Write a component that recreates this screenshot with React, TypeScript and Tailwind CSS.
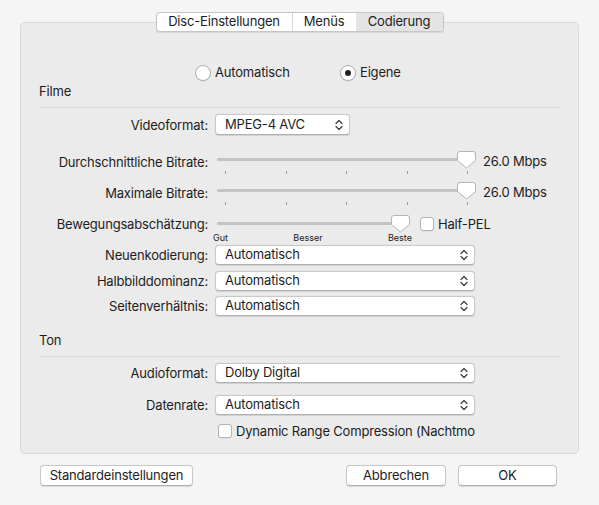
import React from "react";

const FONT = { fontFamily: "Inter, 'Liberation Sans', Arial, sans-serif" };

function Chevrons() {
  return (
    <svg width="8" height="12" viewBox="0 0 8 12" className="shrink-0">
      <path d="M1 4.5 L4 1.5 L7 4.5" fill="none" stroke="#3a3a3a" strokeWidth="1.2" strokeLinecap="round" strokeLinejoin="round" />
      <path d="M1 7.5 L4 10.5 L7 7.5" fill="none" stroke="#3a3a3a" strokeWidth="1.2" strokeLinecap="round" strokeLinejoin="round" />
    </svg>
  );
}

function Select({ value, width }: { value: string; width: string }) {
  return (
    <div
      className={`${width} h-[20px] ml-[7px] flex items-center justify-between pl-[9px] pr-[6px] bg-white border border-[#c9c9c9] border-b-[#b0b0b0] rounded-[4px] shadow-[0_0.5px_1px_rgba(0,0,0,0.12)] text-[13px] text-[#1d1d1d]`}
    >
      <span>{value}</span>
      <Chevrons />
    </div>
  );
}

function Thumb({ left }: { left: number }) {
  return (
    <svg
      width="19"
      height="18"
      viewBox="0 0 19 18"
      className="absolute top-0"
      style={{ left }}
    >
      <path
        d="M3 0.5 H16 Q18.5 0.5 18.5 3 V9.5 L9.5 17 L0.5 9.5 V3 Q0.5 0.5 3 0.5 Z"
        fill="#ffffff"
        stroke="#b4b4b4"
        strokeWidth="1"
      />
    </svg>
  );
}

function Slider({ width, thumbLeft, ticks }: { width: number; thumbLeft: number; ticks?: number[] }) {
  return (
    <div className="relative ml-[9px] h-[24px]" style={{ width }}>
      <div className="absolute left-0 right-0 top-[7px] h-[3px] rounded-full bg-[#c3c3c3]" />
      {ticks &&
        ticks.map((t) => (
          <div key={t} className="absolute top-[20px] w-[1px] h-[3px] bg-[#9c9c9c]" style={{ left: t }} />
        ))}
      <Thumb left={thumbLeft} />
    </div>
  );
}

function Label({ children, className = "" }: { children: React.ReactNode; className?: string }) {
  return (
    <div className={`w-[187px] shrink-0 text-right text-[13px] leading-[16px] text-[#1d1d1d] ${className}`}>{children}</div>
  );
}

function Checkbox() {
  return <div className="w-[14px] h-[14px] shrink-0 bg-white border border-[#b3b3b3] rounded-[3px] shadow-[0_0.5px_0.5px_rgba(0,0,0,0.08)]" />;
}

function Radio({ checked }: { checked?: boolean }) {
  return (
    <div className="w-[16px] h-[16px] shrink-0 rounded-full bg-white border border-[#aeaeae] flex items-center justify-center shadow-[0_0.5px_0.5px_rgba(0,0,0,0.08)]">
      {checked && <div className="w-[6px] h-[6px] rounded-full bg-[#222]" />}
    </div>
  );
}

function Button({ children, width }: { children: React.ReactNode; width: string }) {
  return (
    <div
      className={`${width} h-[21px] flex items-center justify-center bg-white border border-[#c9c9c9] border-b-[#b0b0b0] rounded-[4px] shadow-[0_0.5px_1px_rgba(0,0,0,0.12)] text-[13px] text-[#1d1d1d]`}
    >
      {children}
    </div>
  );
}

export default function App() {
  const ticks = [8, 69, 129, 190, 250];
  return (
    <div className="w-[599px] h-[505px] bg-[#f5f5f5] flex flex-col pt-[12px] overflow-hidden tracking-[-0.18px]" style={FONT}>
      {/* Tabs */}
      <div className="relative z-10 flex justify-center">
        <div className="flex h-[20px] bg-white border border-[#c6c6c6] rounded-[4px] shadow-[0_0.5px_1px_rgba(0,0,0,0.1)] overflow-hidden text-[13px] text-[#1d1d1d]">
          <div className="w-[136px] flex items-center justify-center border-r border-[#d6d6d6]">Disc-Einstellungen</div>
          <div className="w-[63px] flex items-center justify-center">Menüs</div>
          <div className="w-[87px] flex items-center justify-center bg-[#e4e4e4]">Codierung</div>
        </div>
      </div>

      {/* Panel */}
      <div className="mt-[-10px] mx-[20px] w-[559px] h-[432px] bg-[#ebebeb] border border-[#d9d9d9] rounded-[5px] flex flex-col text-[#1d1d1d]">
        {/* Radios */}
        <div className="mt-[42px] h-[16px] flex items-center pl-[174px] text-[13px]">
          <div className="w-[145px] flex items-center gap-[4px]">
            <Radio />
            <span>Automatisch</span>
          </div>
          <div className="flex items-center gap-[4px]">
            <Radio checked />
            <span>Eigene</span>
          </div>
        </div>

        <div className="mt-[2px] h-[16px] leading-[16px] pl-[18px] text-[13px]">Filme</div>
        <div className="mt-[8px] mx-[18px] h-[1px] bg-[#d6d6d6]" />

        {/* Videoformat */}
        <div className="mt-[6px] h-[21px] flex items-center">
          <Label>Videoformat:</Label>
          <Select value="MPEG-4 AVC" width="w-[135px] h-[21px]" />
        </div>

        {/* Slider 1 */}
        <div className="mt-[16px] h-[24px] flex items-start">
          <Label className="mt-[3px]">Durchschnittliche Bitrate:</Label>
          <Slider width={259} thumbLeft={240} ticks={ticks} />
          <div className="ml-[7px] mt-[2px] text-[13px] leading-[16px]">26.0 Mbps</div>
        </div>

        {/* Slider 2 */}
        <div className="mt-[7px] h-[24px] flex items-start">
          <Label className="mt-[3px]">Maximale Bitrate:</Label>
          <Slider width={259} thumbLeft={240} ticks={ticks} />
          <div className="ml-[7px] mt-[2px] text-[13px] leading-[16px]">26.0 Mbps</div>
        </div>

        {/* Slider 3 */}
        <div className="mt-[9px] h-[28px] flex items-start">
          <Label className="mt-[1px]">Bewegungsabschätzung:</Label>
          <div className="flex flex-col">
            <div className="relative ml-[9px] h-[17px] w-[192px]">
              <div className="absolute left-0 right-0 top-[7px] h-[3px] rounded-full bg-[#c3c3c3]" />
              <Thumb left={174} />
            </div>
            <div className="ml-[5px] w-[199px] flex justify-between text-[9px] leading-[11px] text-[#222] tracking-normal">
              <span>Gut</span>
              <span>Besser</span>
              <span>Beste</span>
            </div>
          </div>
          <div className="ml-[8px] mt-[1px] flex items-center gap-[4px]">
            <Checkbox />
            <span className="text-[13px] leading-[16px]">Half-PEL</span>
          </div>
        </div>

        {/* Selects */}
        <div className="mt-[2px] h-[20px] flex items-center">
          <Label>Neuenkodierung:</Label>
          <Select value="Automatisch" width="w-[260px]" />
        </div>
        <div className="mt-[6px] h-[20px] flex items-center">
          <Label>Halbbilddominanz:</Label>
          <Select value="Automatisch" width="w-[260px]" />
        </div>
        <div className="mt-[5px] h-[20px] flex items-center">
          <Label>Seitenverhältnis:</Label>
          <Select value="Automatisch" width="w-[260px]" />
        </div>

        <div className="mt-[16px] h-[16px] leading-[16px] pl-[18px] text-[13px]">Ton</div>
        <div className="mt-[8px] mx-[18px] h-[1px] bg-[#d6d6d6]" />

        <div className="mt-[6px] h-[20px] flex items-center">
          <Label>Audioformat:</Label>
          <Select value="Dolby Digital" width="w-[260px]" />
        </div>
        <div className="mt-[12px] h-[20px] flex items-center">
          <Label>Datenrate:</Label>
          <Select value="Automatisch" width="w-[260px]" />
        </div>
        <div className="mt-[8px] h-[16px] flex items-center">
          <div className="w-[187px] shrink-0" />
          <div className="ml-[10px] w-[257px] overflow-hidden whitespace-nowrap flex items-center gap-[4px]">
            <Checkbox />
            <span className="text-[13px] leading-[16px]">Dynamic Range Compression (Nachtmodus)</span>
          </div>
        </div>
      </div>

      {/* Buttons */}
      <div className="mt-[11px] flex items-center pl-[40px]">
        <Button width="w-[153px]">Standardeinstellungen</Button>
        <div className="ml-[153px] flex gap-[12px]">
          <Button width="w-[100px]">Abbrechen</Button>
          <Button width="w-[99px]">OK</Button>
        </div>
      </div>
    </div>
  );
}
